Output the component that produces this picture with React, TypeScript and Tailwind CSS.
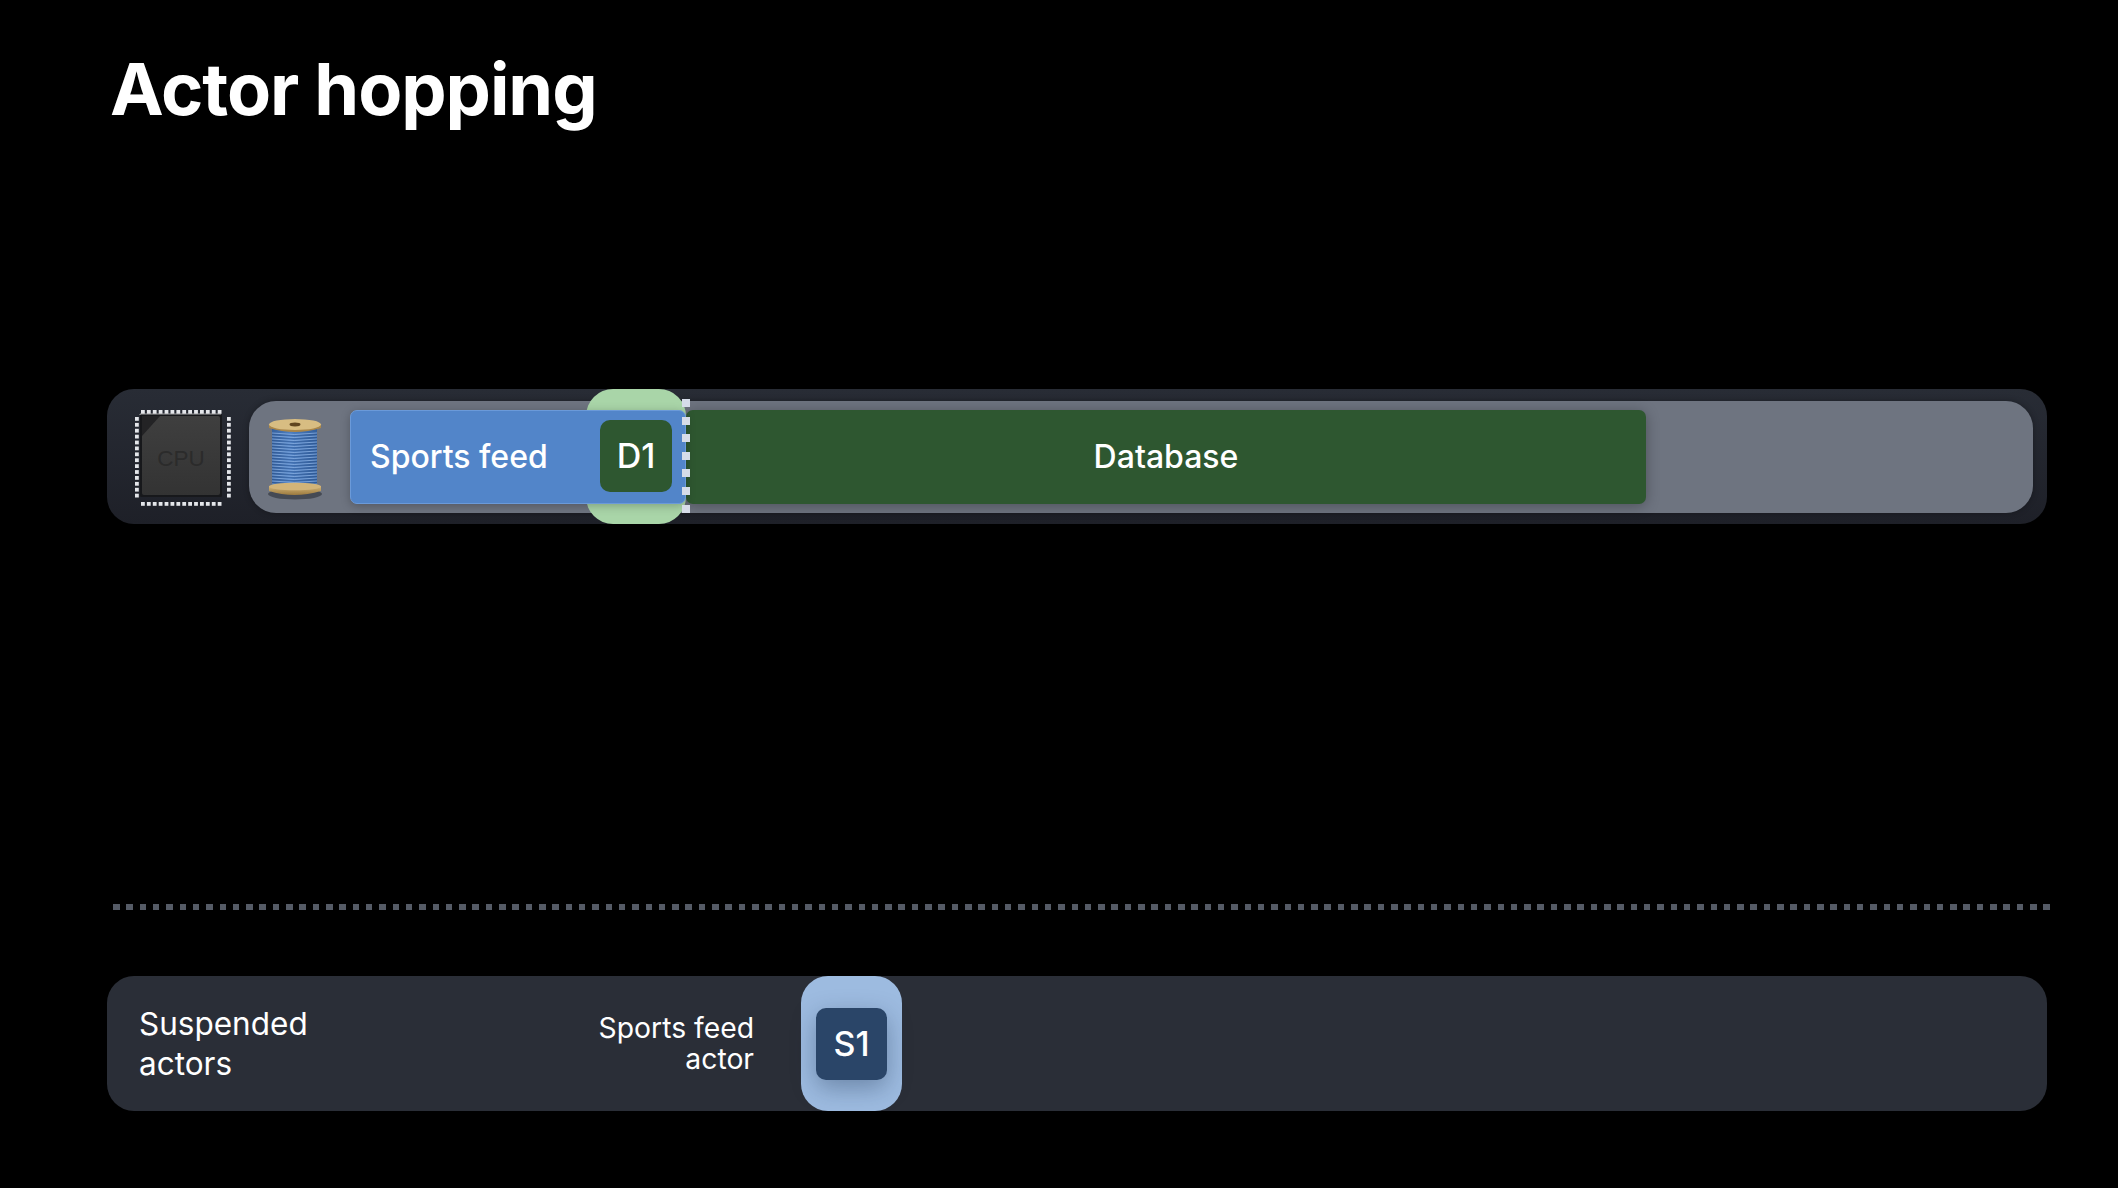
const dashes = [0, 1, 2, 3, 4, 5, 6]
const dots = Array.from({ length: 146 }, (_, i) => i)
const topPads = Array.from({ length: 14 }, (_, i) => i)

function CpuIcon() {
  return (
    <svg width="104" height="104" viewBox="0 0 104 104" className="shrink-0">
      <defs>
        <linearGradient id="chip" x1="0" y1="0" x2="0" y2="1">
          <stop offset="0" stopColor="#3f3f3f" />
          <stop offset="1" stopColor="#333333" />
        </linearGradient>
      </defs>
      {topPads.map((i) => (
        <g key={i} fill="#e4e6ea">
          <rect x={11 + i * 5.9} y={5} width={3.8} height={3.8} />
          <rect x={11 + i * 5.9} y={97} width={3.8} height={3.8} />
          <rect x={5} y={12 + i * 5.9} width={3.8} height={3.8} />
          <rect x={97} y={12 + i * 5.9} width={3.8} height={3.8} />
        </g>
      ))}
      <rect x="10" y="9" width="82" height="83" rx="1.5" fill="#17181b" />
      <path d="M10 10 L10 9 L91 9" fill="none" stroke="#c9c9c9" strokeWidth="0.8" />
      <rect x="12" y="11" width="78" height="79" rx="2" fill="url(#chip)" />
      <path d="M12 11 H30 L12 31 Z" fill="#232325" />
      <text x="51" y="61" textAnchor="middle" fontFamily="Liberation Sans, sans-serif" fontSize="22.5" fill="#2b2b2b">
        CPU
      </text>
    </svg>
  )
}

function SpoolIcon() {
  const lines = Array.from({ length: 19 }, (_, i) => i)
  return (
    <svg width="66" height="92" viewBox="0 0 66 92" className="shrink-0">
      <defs>
        <linearGradient id="thread" x1="0" y1="0" x2="1" y2="0">
          <stop offset="0" stopColor="#35609c" />
          <stop offset="0.4" stopColor="#4d7fc2" />
          <stop offset="1" stopColor="#33609e" />
        </linearGradient>
        <linearGradient id="wood" x1="0" y1="0" x2="0" y2="1">
          <stop offset="0" stopColor="#d3b577" />
          <stop offset="1" stopColor="#9c7a3f" />
        </linearGradient>
      </defs>
      <ellipse cx="33" cy="83" rx="27" ry="5.5" fill="#30343c" opacity="0.65" />
      <rect x="10" y="16" width="45" height="62" fill="url(#thread)" />
      {lines.map((i) => (
        <g key={i} fill="none">
          <path d={`M10 ${22 + i * 3} Q32 ${25 + i * 3} 55 ${22 + i * 3}`} stroke="#8fb4e6" strokeOpacity="0.75" strokeWidth="1" />
          <path d={`M10 ${23.4 + i * 3} Q32 ${26.4 + i * 3} 55 ${23.4 + i * 3}`} stroke="#2a4f86" strokeOpacity="0.5" strokeWidth="0.8" />
        </g>
      ))}
      <path d="M7 75 V80 Q32 88 59 80 V75 Z" fill="url(#wood)" />
      <ellipse cx="33" cy="75.5" rx="26" ry="3.8" fill="#d2b478" />
      <path d="M7 13 V17 Q33 25 59 17 V13 Z" fill="#a9864a" />
      <ellipse cx="33" cy="13.5" rx="26" ry="5.5" fill="#d8bd82" />
      <ellipse cx="33" cy="13.5" rx="5.5" ry="1.9" fill="#5f4520" />
    </svg>
  )
}

export default function App() {
  return (
    <div className="w-[2118px] h-[1188px] bg-black pl-[107px] pr-[71px] overflow-hidden font-['Inter',sans-serif] text-white">
      <div className="h-[389px] pt-[45px] pl-[3px]">
        <h1 className="text-[72px] leading-[88px] font-bold tracking-[-1.05px]">Actor hopping</h1>
      </div>

      {/* running thread */}
      <div className="relative h-[135px] rounded-[27px] bg-gradient-to-b from-[#282c35] to-[#1e2028] flex items-center pl-[23px] pr-[14px]">
        <CpuIcon />
        <div className="ml-[15px] flex-1 h-[112px] rounded-[27px] bg-[#6e7480] flex items-center pl-[13px] shadow-[0_0_6px_rgba(0,0,0,0.3)]">
          <SpoolIcon />
          <div className="ml-[22px] flex h-[94px]">
            <div className="relative z-20 w-[336px] rounded-[7px] bg-[#5285c9] border border-[#6b9ad9] shadow-[0_2px_10px_rgba(0,0,0,0.25)] flex items-center pl-[19px] text-[32px] font-medium">
              Sports feed
              <div className="absolute left-[249px] top-[9px] w-[72px] h-[72px] rounded-[10px] bg-[#2e5730] flex items-center justify-center text-[34px] font-medium">
                D1
              </div>
            </div>
            <div className="w-[960px] rounded-[7px] bg-[#2e5730] shadow-[0_2px_14px_rgba(0,0,0,0.3)] flex items-center justify-center text-[32px] font-medium">
              Database
            </div>
          </div>
        </div>
        {/* actor tile sits behind the blue job */}
        <div className="absolute z-10 left-[479px] top-0 w-[100px] h-[135px] rounded-[27px] bg-[#a9d5a8]" />
        <div className="absolute z-30 left-[575px] top-[10px] flex flex-col gap-[9.6px]">
          {dashes.map((d) => (
            <div key={d} className="w-[8px] h-[8px] bg-[#d6dce9]" />
          ))}
        </div>
      </div>

      <div className="mt-[380px] h-[6px] pl-[6px] flex justify-between w-[1943px]">
        {dots.map((d) => (
          <div key={d} className="w-[6.5px] h-[6px] bg-[#555b66]" />
        ))}
      </div>

      {/* suspended actors */}
      <div className="mt-[66px] h-[135px] rounded-[27px] bg-[#2a2e37] flex items-center">
        <div className="w-[400px] pl-[32px] text-[31.5px] leading-[40px]">
          Suspended
          <br />
          actors
        </div>
        <div className="w-[247px] text-right text-[28.3px] leading-[31px]">
          Sports feed
          <br />
          actor
        </div>
        <div className="ml-[47px] w-[101px] h-[135px] rounded-[27px] bg-[#9dbbe0] flex items-center justify-center">
          <div className="w-[71px] h-[72px] rounded-[10px] bg-[#2a4568] shadow-[0_8px_24px_rgba(20,40,70,0.35)] flex items-center justify-center text-[34px] font-medium">
            S1
          </div>
        </div>
      </div>
    </div>
  )
}
